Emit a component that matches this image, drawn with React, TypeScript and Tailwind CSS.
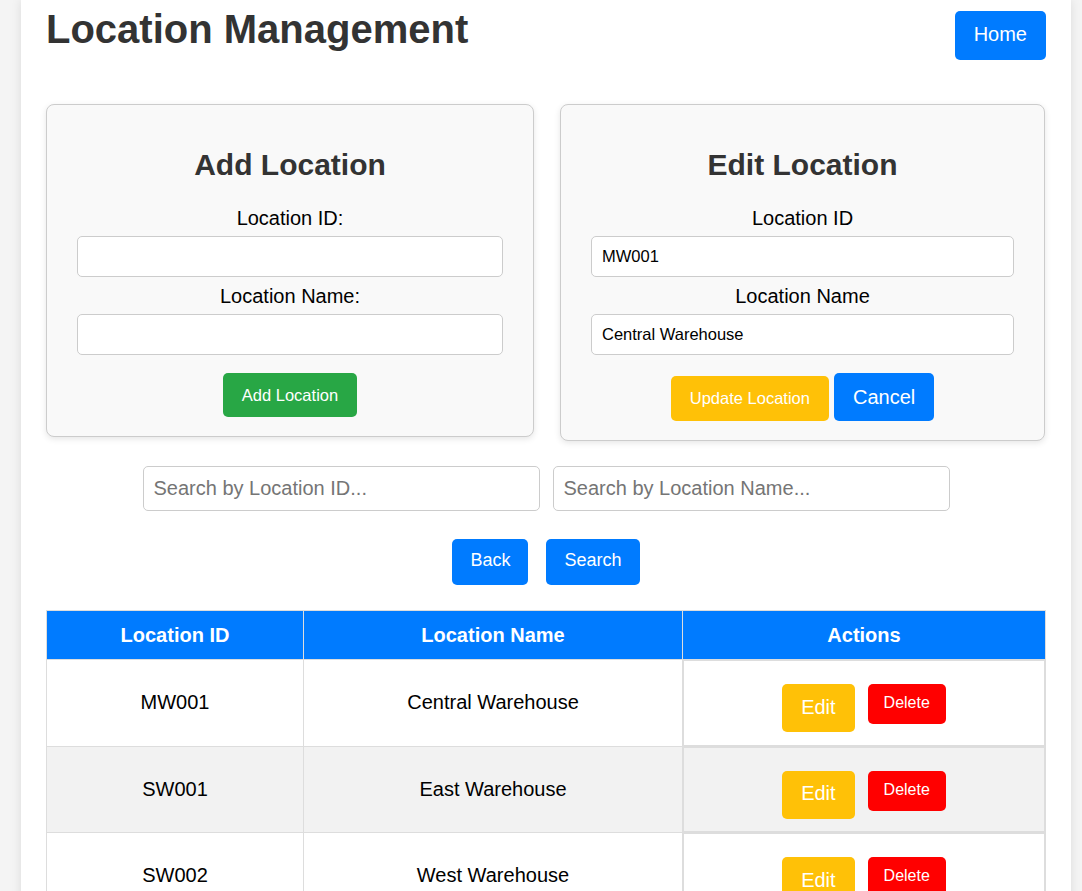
import React, { useState } from 'react';

type Loc = { id: string; name: string };

const rows: Loc[] = [
  { id: 'MW001', name: 'Central Warehouse' },
  { id: 'SW001', name: 'East Warehouse' },
  { id: 'SW002', name: 'West Warehouse' },
];

export default function App() {
  const [editId, setEditId] = useState('MW001');
  const [editName, setEditName] = useState('Central Warehouse');

  return (
    <div className="min-h-screen w-full bg-[#f4f4f4] font-['Liberation_Sans',Arial,sans-serif]">
      <div className="ml-[21px] w-[1050px] min-h-screen bg-white px-[25px] pb-10 shadow-[0_0_10px_rgba(0,0,0,0.1)]">
        {/* Header */}
        <div className="flex items-start justify-between">
          <h1 className="mt-[6px] text-[40px] leading-[46px] font-bold text-[#333]">Location Management</h1>
          <button className="mt-[11px] rounded-[5px] bg-[#007bff] px-[19px] pt-[12px] pb-[14px] text-[20px] leading-[23px] text-white">
            Home
          </button>
        </div>

        {/* Forms */}
        <div className="mt-[44px] flex items-start gap-[26px]">
          <div className="flex w-[488px] flex-col items-center rounded-[8px] border border-[#ccc] bg-[#f9f9f9] px-[30px] pt-[43px] pb-[19px] text-center shadow-[0_2px_6px_rgba(0,0,0,0.1)]">
            <h2 className="text-[30px] leading-[34px] font-bold text-[#333]">Add Location</h2>
            <label className="mt-[25px] text-[20px] leading-[23px] text-black">Location ID:</label>
            <input className="mt-[6px] h-[41px] w-full rounded-[5px] border border-[#ccc] bg-white px-[10px] text-[16.5px] outline-none" />
            <label className="mt-[8px] text-[20px] leading-[23px] text-black">Location Name:</label>
            <input className="mt-[6px] h-[41px] w-full rounded-[5px] border border-[#ccc] bg-white px-[10px] text-[16.5px] outline-none" />
            <button className="mt-[18px] rounded-[5px] bg-[#28a745] px-[19px] py-[12.5px] text-[16.5px] leading-[19px] text-white">
              Add Location
            </button>
          </div>

          <div className="flex w-[485px] flex-col items-center rounded-[8px] border border-[#ccc] bg-[#f9f9f9] px-[30px] pt-[43px] pb-[19px] text-center shadow-[0_2px_6px_rgba(0,0,0,0.1)]">
            <h2 className="text-[30px] leading-[34px] font-bold text-[#333]">Edit Location</h2>
            <label className="mt-[25px] text-[20px] leading-[23px] text-black">Location ID</label>
            <input
              value={editId}
              onChange={(e) => setEditId(e.target.value)}
              className="mt-[6px] h-[41px] w-full rounded-[5px] border border-[#ccc] bg-white px-[10px] text-[16.5px] text-black outline-none"
            />
            <label className="mt-[8px] text-[20px] leading-[23px] text-black">Location Name</label>
            <input
              value={editName}
              onChange={(e) => setEditName(e.target.value)}
              className="mt-[6px] h-[41px] w-full rounded-[5px] border border-[#ccc] bg-white px-[10px] text-[16.5px] text-black outline-none"
            />
            <div className="mt-[18px] flex items-baseline gap-[5px]">
              <button className="rounded-[5px] bg-[#ffc107] px-[19px] py-[13px] text-[16.5px] leading-[19px] text-white">
                Update Location
              </button>
              <button className="rounded-[5px] bg-[#007bff] px-[19px] py-[12.5px] text-[20px] leading-[23px] text-white">
                Cancel
              </button>
            </div>
          </div>
        </div>

        {/* Search */}
        <div className="mt-[25px] flex justify-center gap-[13px]">
          <input
            placeholder="Search by Location ID..."
            className="h-[45px] w-[397px] rounded-[5px] border border-[#ccc] px-[10px] text-[20px] outline-none placeholder:text-[#757575]"
          />
          <input
            placeholder="Search by Location Name..."
            className="h-[45px] w-[397px] rounded-[5px] border border-[#ccc] px-[10px] text-[20px] outline-none placeholder:text-[#757575]"
          />
        </div>
        <div className="mt-[28px] flex justify-center gap-[18px]">
          <button className="h-[46px] rounded-[5px] bg-[#007bff] px-[18px] pb-[3px] text-[18px] text-white">Back</button>
          <button className="h-[46px] rounded-[5px] bg-[#007bff] px-[18px] pb-[3px] text-[18px] text-white">Search</button>
        </div>

        {/* Table */}
        <table className="mt-[25px] w-full table-fixed border-collapse text-[20px]">
          <colgroup>
            <col className="w-[257px]" />
            <col className="w-[379px]" />
            <col />
          </colgroup>
          <thead>
            <tr className="bg-[#007bff] text-white">
              <th className="h-[49px] border border-[#ddd] p-0 font-bold">Location ID</th>
              <th className="h-[49px] border border-[#ddd] p-0 font-bold">Location Name</th>
              <th className="h-[49px] border border-[#ddd] p-0 font-bold">Actions</th>
            </tr>
          </thead>
          <tbody>
            {rows.map((r, i) => (
              <tr key={r.id} className={i % 2 === 1 ? 'bg-[#f2f2f2]' : 'bg-white'}>
                <td className="border border-[#ddd] p-0 pb-[1px] text-center align-middle text-black">{r.id}</td>
                <td className="border border-[#ddd] p-0 pb-[1px] text-center align-middle text-black">{r.name}</td>
                <td className="border border-[#ddd] p-0 align-top">
                  <div className="flex h-[85.5px] items-start justify-center gap-[13px] border border-[#ddd] pt-[23px]">
                    <button className="rounded-[5px] bg-[#ffc107] px-[19px] pt-[11.5px] pb-[13.5px] text-[20px] leading-[23px] text-white">
                      Edit
                    </button>
                    <button className="rounded-[5px] bg-[#ff0000] px-[16px] pt-[10px] pb-[12px] text-[16px] leading-[18px] text-white">
                      Delete
                    </button>
                  </div>
                </td>
              </tr>
            ))}
          </tbody>
        </table>
      </div>
    </div>
  );
}
